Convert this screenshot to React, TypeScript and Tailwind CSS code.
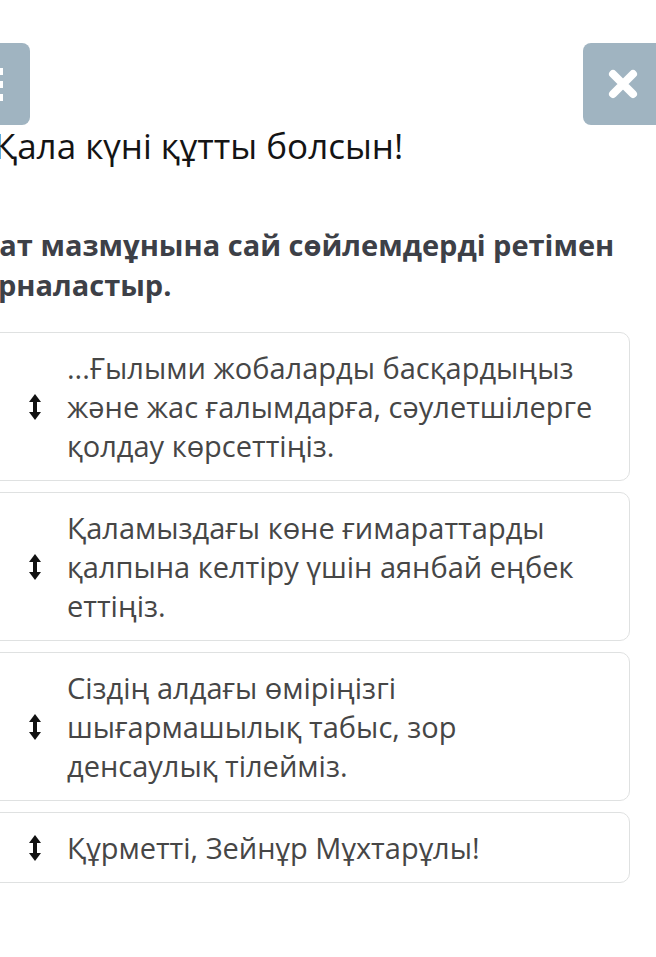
import React from 'react';

const items = [
    '...Ғылыми жобаларды басқардыңыз және жас ғалымдарға, сәулетшілерге қолдау көрсеттіңіз.',
    'Қаламыздағы көне ғимараттарды қалпына келтіру үшін аянбай еңбек еттіңіз.',
    'Сіздің алдағы өміріңізгі шығармашылық табыс, зор денсаулық тілейміз.',
    'Құрметті, Зейнұр Мұхтарұлы!',
];

function SortIcon() {
    return (
        <svg width="12" height="28" viewBox="0 0 12 28" className="shrink-0">
            <path d="M6 1 L12 9 H0 Z" fill="#111" />
            <path d="M6 27 L12 19 H0 Z" fill="#111" />
            <rect x="4" y="7" width="4" height="14" fill="#111" />
        </svg>
    );
}

export default function App() {
    return (
        <div className="w-[656px] h-[957px] overflow-hidden bg-white" style={{ fontFamily: '"Open Sans", "Noto Sans", sans-serif' }}>
            <div className="flex justify-between mt-[43px] ml-[-52px] mr-[-9px]">
                <button className="w-[82px] h-[82px] rounded-[8px] bg-[#a0b4c1] flex items-center justify-center">
                    <div className="flex flex-col gap-[6px] ml-[-3px]">
                        <span className="block w-[30px] h-[7px] bg-white" />
                        <span className="block w-[30px] h-[7px] bg-white" />
                        <span className="block w-[30px] h-[7px] bg-white" />
                    </div>
                </button>
                <button className="w-[82px] h-[82px] rounded-[8px] bg-[#a0b4c1] flex items-center justify-center">
                    <svg width="30" height="30" viewBox="0 0 30 30" className="ml-[-2px]">
                        <path d="M5 5 L25 25 M25 5 L5 25" stroke="#fff" strokeWidth="8" strokeLinecap="round" />
                    </svg>
                </button>
            </div>

            <h1 className="ml-[-6px] text-[35px] leading-[42px] text-[#141414] font-normal">Қала күні құтты болсын!</h1>

            <p className="mt-[58px] ml-[-20px] text-[29px] leading-[40px] font-bold text-[#3d4047]">
                Хат мазмұнына сай сөйлемдерді ретімен орналастыр.
            </p>

            <div className="mt-[27px] ml-[-20px] mr-[26px] flex flex-col gap-[11px]">
                {items.map((t) => (
                    <div key={t} className="flex items-center gap-[26px] rounded-[10px] border border-[#dfe1e1] pl-[48px] pr-[22px] py-[15px]">
                        <SortIcon />
                        <span className="text-[29px] leading-[39px] text-[#464646]">{t}</span>
                    </div>
                ))}
            </div>
        </div>
    );
}
